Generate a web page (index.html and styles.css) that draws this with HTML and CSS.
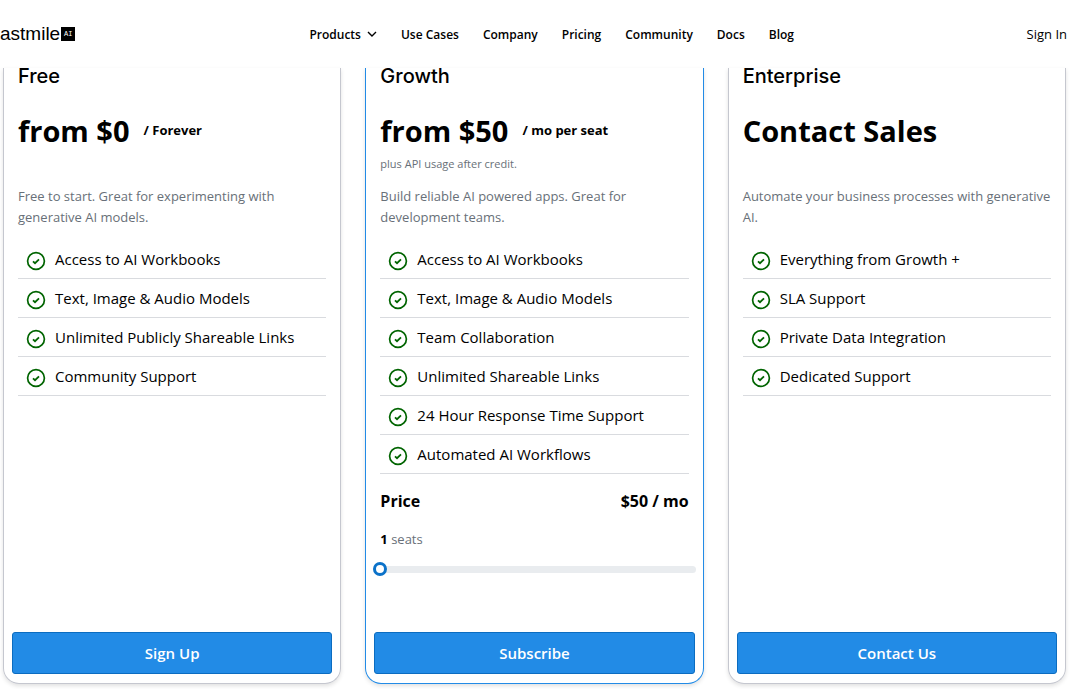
FILE: index.html
```html
<!DOCTYPE html>
<html lang="en">
<head>
  <meta charset="UTF-8" />
  <meta name="viewport" content="width=device-width, initial-scale=1.0"/>
  <title>Pricing</title>
  <link rel="stylesheet" href="styles.css">
</head>
<body>

<!-- Shared icons -->
<svg class="icon-defs" width="0" height="0" aria-hidden="true">
  <symbol id="check" viewBox="0 0 20 20">
    <circle cx="10" cy="10" r="8.4" fill="none" stroke="currentColor" stroke-width="1.7"/>
    <path d="M7 10.3l2 1.9 4-3.9" fill="none" stroke="currentColor" stroke-width="1.8"/>
  </symbol>
</svg>

<header class="header">
  <a class="logo" href="#">astmile<span class="logo-badge">AI</span></a>
  <nav class="nav">
    <a href="#">Products
      <svg class="chevron" viewBox="0 0 10 10"><path d="M1 3l4 4 4-4" fill="none" stroke="currentColor" stroke-width="1.4"/></svg>
    </a>
    <a href="#">Use Cases</a>
    <a href="#">Company</a>
    <a href="#">Pricing</a>
    <a href="#">Community</a>
    <a href="#">Docs</a>
    <a href="#">Blog</a>
  </nav>
  <a class="sign-in" href="#">Sign In</a>
</header>

<main class="plans">
  <!-- Free -->
  <section class="card">
    <div class="card-body">
      <h2>Free</h2>
      <p class="price">from $0 <span>/ Forever</span></p>
      <p class="note"></p>
      <p class="desc">Free to start. Great for experimenting with generative AI models.</p>
      <ul class="features">
        <li><svg><use href="#check"/></svg>Access to AI Workbooks</li>
        <li><svg><use href="#check"/></svg>Text, Image &amp; Audio Models</li>
        <li><svg><use href="#check"/></svg>Unlimited Publicly Shareable Links</li>
        <li><svg><use href="#check"/></svg>Community Support</li>
      </ul>
    </div>
    <button type="button">Sign Up</button>
  </section>

  <!-- Growth -->
  <section class="card featured">
    <div class="card-body">
      <h2>Growth</h2>
      <p class="price">from $50 <span>/ mo per seat</span></p>
      <p class="note">plus API usage after credit.</p>
      <p class="desc">Build reliable AI powered apps. Great for development teams.</p>
      <ul class="features">
        <li><svg><use href="#check"/></svg>Access to AI Workbooks</li>
        <li><svg><use href="#check"/></svg>Text, Image &amp; Audio Models</li>
        <li><svg><use href="#check"/></svg>Team Collaboration</li>
        <li><svg><use href="#check"/></svg>Unlimited Shareable Links</li>
        <li><svg><use href="#check"/></svg>24 Hour Response Time Support</li>
        <li><svg><use href="#check"/></svg>Automated AI Workflows</li>
      </ul>
      <div class="total"><span>Price</span><span>$50 / mo</span></div>
      <label class="seats" for="seats"><b>1</b> seats</label>
      <input type="range" id="seats" min="1" max="20" value="1">
    </div>
    <button type="button">Subscribe</button>
  </section>

  <!-- Enterprise -->
  <section class="card">
    <div class="card-body">
      <h2>Enterprise</h2>
      <p class="price">Contact Sales</p>
      <p class="note"></p>
      <p class="desc">Automate your business processes with generative AI.</p>
      <ul class="features">
        <li><svg><use href="#check"/></svg>Everything from Growth +</li>
        <li><svg><use href="#check"/></svg>SLA Support</li>
        <li><svg><use href="#check"/></svg>Private Data Integration</li>
        <li><svg><use href="#check"/></svg>Dedicated Support</li>
      </ul>
    </div>
    <button type="button">Contact Us</button>
  </section>
</main>

</body>
</html>
```
FILE: styles.css
```css
* {
  box-sizing: border-box;
}

body {
  margin: 0;
  min-height: 100vh;
  display: flex;
  flex-direction: column;
  font-family: "Open Sans", "Noto Sans", sans-serif;
  color: #000;
  background: #fff;
}

h2, p, ul {
  margin: 0;
  padding: 0;
}

a {
  color: inherit;
  text-decoration: none;
}

.icon-defs {
  position: absolute;
}

/* Header */
.header {
  display: grid;
  grid-template-columns: 17fr auto 15fr;
  align-items: center;
  height: 68px;
  padding-right: 3px;
  background: #fff;
}

.logo {
  display: flex;
  align-items: center;
  gap: 1px;
  font-family: "Liberation Sans", sans-serif;
  font-size: 19px;
}

.logo-badge {
  width: 14px;
  height: 14px;
  background: #000;
  color: #fff;
  font-family: "Liberation Mono", monospace;
  font-size: 7px;
  line-height: 14px;
  text-align: center;
}

.nav {
  display: flex;
  gap: 24px;
  font-size: 12px;
  font-weight: 600;
}

.nav a {
  display: flex;
  align-items: center;
  gap: 6px;
}

.chevron {
  width: 10px;
  height: 10px;
}

.sign-in {
  justify-self: end;
  font-size: 13px;
}

/* Plans */
.plans {
  flex: 1;
  display: grid;
  grid-template-columns: repeat(3, 1fr);
  gap: 24px;
  padding: 0 4px 5px 3px;
}

.card {
  display: flex;
  flex-direction: column;
  justify-content: space-between;
  padding: 0 8px 9px;
  border: 1px solid #c5c7cf;
  border-top: none;
  border-radius: 0 0 16px 16px;
  box-shadow: 0 2px 4px rgba(0, 0, 0, 0.12);
}

.card.featured {
  border-color: #228be6;
}

.card-body {
  padding: 0 6px;
}

.card h2 {
  font-family: Inter, sans-serif;
  font-size: 20px;
  font-weight: 500;
  line-height: 16px;
}

.price {
  display: flex;
  align-items: center;
  gap: 14px;
  margin-top: 26px;
  font-size: 29px;
  font-weight: 700;
  line-height: 42px;
}

.price span {
  font-size: 13px;
  line-height: 40px;
  padding-bottom: 2px;
}

.note {
  height: 22px;
  font-size: 11px;
  line-height: 24px;
  color: #687078;
}

.desc {
  margin-top: 12px;
  font-size: 13px;
  line-height: 21px;
  color: #687078;
}

.features {
  margin-top: 12px;
  list-style: none;
}

.features li {
  display: flex;
  align-items: center;
  gap: 9px;
  height: 39px;
  padding-left: 8px;
  border-bottom: 1px solid #d9dbdf;
  font-size: 15px;
  font-weight: 500;
}

.features svg {
  width: 20px;
  height: 20px;
  margin-top: 3px;
  color: #006400;
}

.total {
  display: flex;
  justify-content: space-between;
  margin-top: 15px;
  font-size: 16px;
  font-weight: 700;
  line-height: 24px;
}

.seats {
  display: block;
  margin-top: 16px;
  font-size: 13px;
  line-height: 20px;
  color: #687078;
}

.seats b {
  color: #000;
}

/* Seat slider */
input[type="range"] {
  -webkit-appearance: none;
  appearance: none;
  display: block;
  width: calc(100% + 14px);
  height: 14px;
  margin: 13px -7px 0;
  background: none;
}

input[type="range"]::-webkit-slider-runnable-track {
  height: 7px;
  border-radius: 4px;
  background: #e9ecef;
}

input[type="range"]::-webkit-slider-thumb {
  -webkit-appearance: none;
  width: 14px;
  height: 14px;
  margin-top: -4px;
  border: 3px solid #0b72c9;
  border-radius: 50%;
  background: #fff;
}

button {
  width: 100%;
  height: 42px;
  border: 1px solid #0b6cc0;
  border-radius: 3px;
  background: #228be6;
  color: #fff;
  font-family: inherit;
  font-size: 15px;
  font-weight: 600;
  cursor: pointer;
}

button:hover {
  background: #1c7ed6;
}
```
